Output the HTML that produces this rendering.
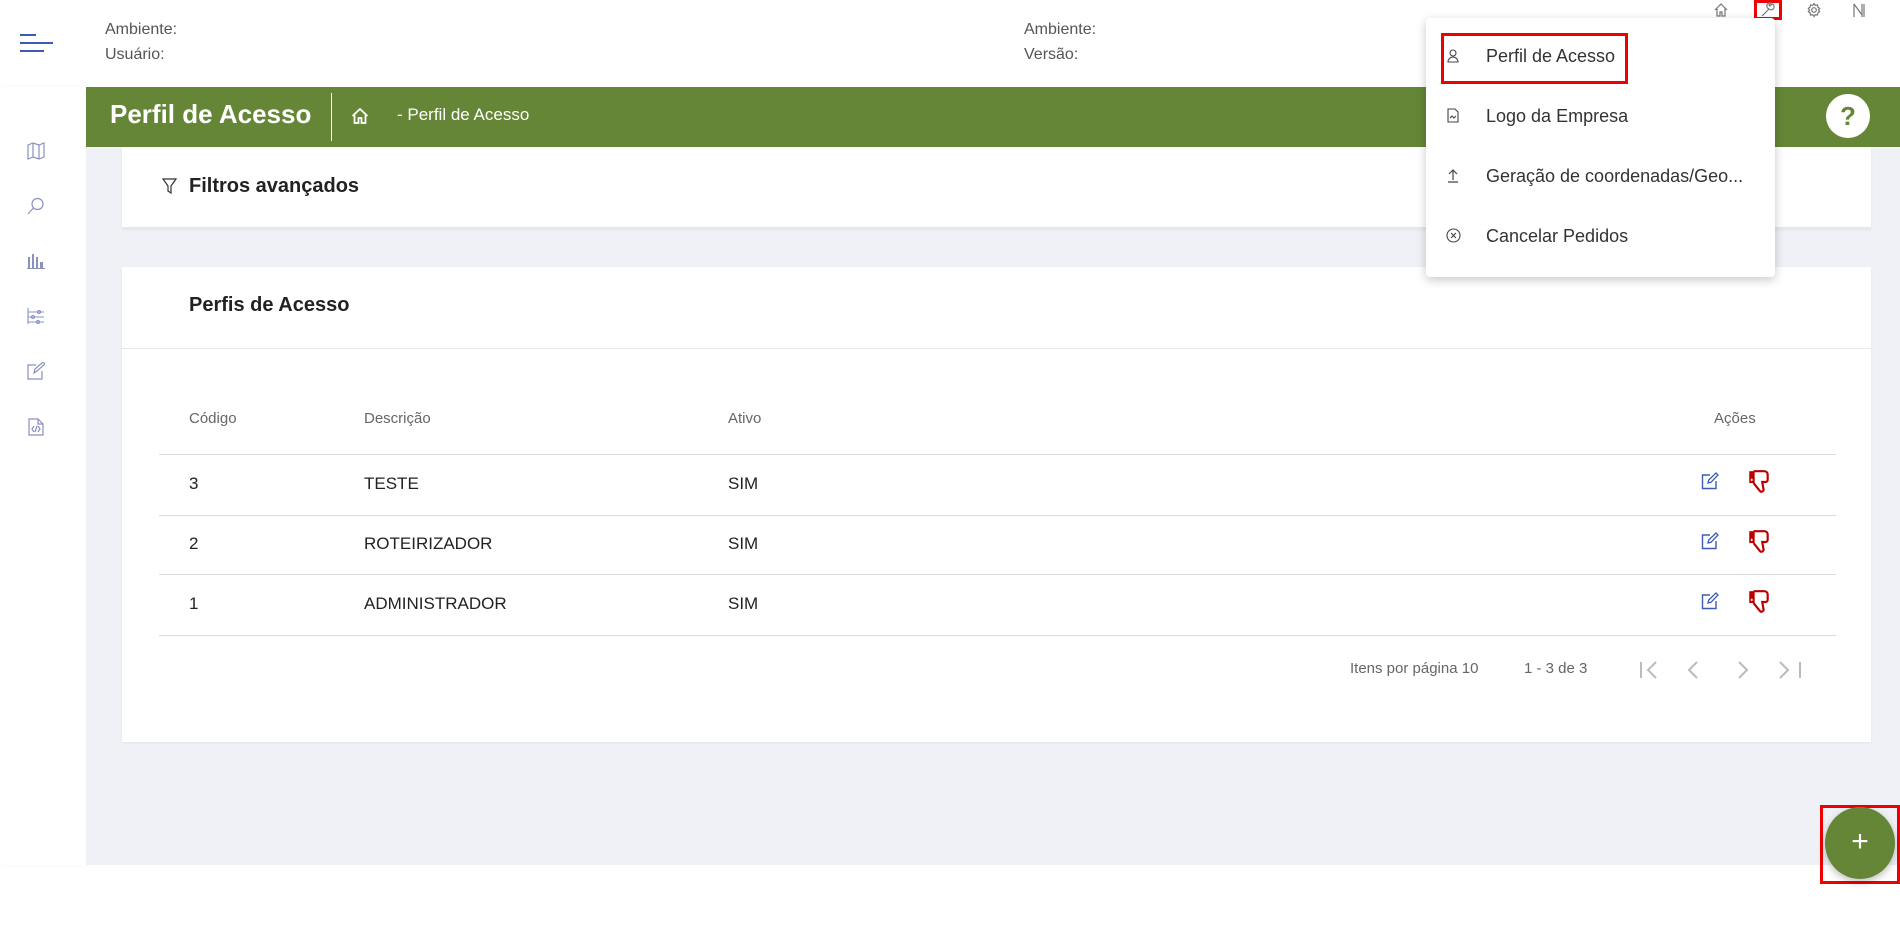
<!DOCTYPE html>
<html><head><meta charset="utf-8"><style>
*{margin:0;padding:0;box-sizing:border-box}
body{width:1900px;height:943px;overflow:hidden;background:#fff;font-family:"Liberation Sans",sans-serif;color:#222;position:relative}
.abs{position:absolute}
.hdr{left:0;top:0;width:1900px;height:87px;background:#fff}
.htxt{font-size:16px;color:#555;line-height:25px}
.side{left:0;top:87px;width:86px;height:778px;background:#fff;box-shadow:2px 0 6px rgba(0,0,0,.04)}
.main{left:86px;top:87px;width:1814px;height:778px;background:#f0f1f6}
.green{left:86px;top:87px;width:1814px;height:60px;background:#648636}
.card{background:#fff;box-shadow:0 1px 3px rgba(0,0,0,.06)}
.th{font-size:15px;color:#666}
.td{font-size:17px;color:#222}
.line{height:1px;background:#dcdcdc;left:159px;width:1677px}
.menu{left:1426px;top:18px;width:349px;height:259px;background:#fff;border-radius:4px;box-shadow:0 3px 10px rgba(0,0,0,.22)}
.mi{font-size:18px;color:#333;left:60px}
svg{display:block}
</style></head><body>
<div class="abs hdr"></div>
<div class="abs" style="left:20px;top:34px;width:16px;height:2px;background:#3b5bb5"></div>
<div class="abs" style="left:20px;top:42px;width:33px;height:2px;background:#3b5bb5"></div>
<div class="abs" style="left:20px;top:50px;width:24px;height:2px;background:#3b5bb5"></div>
<div class="abs htxt" style="left:105px;top:17px">Ambiente:<br>Usuário:</div>
<div class="abs htxt" style="left:1024px;top:17px">Ambiente:<br>Versão:</div>
<svg class="abs" style="left:1713px;top:2px" width="16" height="16" viewBox="0 0 16 16" fill="none" stroke="#777" stroke-width="1.2"><path d="M2 8L8 2l6 6M4 6.5V14h3v-4h2v4h3V6.5"/></svg>
<div class="abs" style="left:1754px;top:0;width:28px;height:20px;border:3px solid #e00"></div>
<svg class="abs" style="left:1760px;top:2px" width="16" height="16" viewBox="0 0 16 16" fill="none" stroke="#777" stroke-width="1.2"><path d="M2 14l7-7M9 7a3 3 0 1 0 3-5l-2 2-1-1 2-2a3 3 0 0 0-2 6z"/></svg>
<svg class="abs" style="left:1806px;top:2px" width="16" height="16" viewBox="0 0 16 16" fill="none" stroke="#777" stroke-width="1.2"><circle cx="8" cy="8" r="2.3"/><path d="M8 1.5l1.3 1.8 2.2-.4.4 2.2 1.8 1.3-1.2 1.6 1.2 1.6-1.8 1.3-.4 2.2-2.2-.4L8 14.5l-1.3-1.8-2.2.4-.4-2.2-1.8-1.3L3.5 8 2.3 6.4l1.8-1.3.4-2.2 2.2.4z"/></svg>
<svg class="abs" style="left:1852px;top:2px" width="14" height="16" viewBox="0 0 14 16" fill="none" stroke="#777" stroke-width="1.2"><path d="M2 2v13M2 2l8 11M10 2v13M12 2v13"/></svg>

<div class="abs side"></div>
<div class="abs main"></div>
<svg class="abs" style="left:27px;top:142px" width="18" height="18" viewBox="0 0 18 18" fill="none" stroke="#8a90c0" stroke-width="1.2"><path d="M1 3l5-2 6 2 5-2v14l-5 2-6-2-5 2zM6 1v14M12 3v14"/></svg>
<svg class="abs" style="left:27px;top:197px" width="18" height="18" viewBox="0 0 18 18" fill="none" stroke="#8a90c0" stroke-width="1.2"><circle cx="10.5" cy="7" r="5.5"/><path d="M6.5 11L1 17"/></svg>
<svg class="abs" style="left:27px;top:252px" width="18" height="18" viewBox="0 0 18 18" fill="#8a90c0"><rect x="1" y="5" width="2" height="12"/><rect x="5" y="2" width="2" height="15"/><rect x="9" y="5" width="2" height="12"/><rect x="13" y="10" width="3" height="7"/><rect x="0" y="16" width="18" height="1"/></svg>
<svg class="abs" style="left:27px;top:307px" width="18" height="18" viewBox="0 0 18 18" fill="none" stroke="#8a90c0" stroke-width="1.1"><path d="M1 1v16M1 5h16M1 10h16M1 15h16"/><circle cx="12" cy="5" r="1.5"/><circle cx="6" cy="10" r="1.5"/><circle cx="11" cy="15" r="1.5"/></svg>
<svg class="abs" style="left:27px;top:362px" width="18" height="18" viewBox="0 0 18 18" fill="none" stroke="#8a90c0" stroke-width="1.2"><path d="M9 3H1v14h14V9M7 11l1-4 8-7 2 2-8 7z"/></svg>
<svg class="abs" style="left:28px;top:418px" width="16" height="18" viewBox="0 0 16 18" fill="none" stroke="#8a90c0" stroke-width="1.2"><path d="M1 1h9l5 5v11H1zM10 1v5h5M6 8l-2 3 2 3M10 8l2 3-2 3M9 8l-2 6"/></svg>

<div class="abs green"></div>
<div class="abs" style="left:110px;top:99px;font-size:26px;font-weight:bold;color:#fff">Perfil de Acesso</div>
<div class="abs" style="left:331px;top:93px;width:1px;height:48px;background:#fff"></div>
<svg class="abs" style="left:351px;top:107px" width="18" height="18" viewBox="0 0 18 18" fill="none" stroke="#fff" stroke-width="1.8"><path d="M1.5 9L9 2l7.5 7M3.5 7.5V16h4v-5h3v5h4V7.5"/></svg>
<div class="abs" style="left:397px;top:105px;font-size:17px;color:#fff">- Perfil de Acesso</div>
<div class="abs" style="left:1826px;top:94px;width:44px;height:44px;border-radius:50%;background:#fff;color:#648636;font-weight:bold;font-size:26px;text-align:center;line-height:44px">?</div>

<div class="abs card" style="left:122px;top:147px;width:1749px;height:82px;border-bottom:2px solid #e6e7ec"></div>
<svg class="abs" style="left:162px;top:178px" width="15" height="16" viewBox="0 0 15 16" fill="none" stroke="#333" stroke-width="1.2"><path d="M1 1h13L9 8v7L6 13V8z"/></svg>
<div class="abs" style="left:189px;top:175px;font-size:20px;font-weight:bold;color:#222">Filtros avançados</div>

<div class="abs card" style="left:122px;top:267px;width:1749px;height:475px"></div>
<div class="abs" style="left:189px;top:294px;font-size:20px;font-weight:bold;color:#222">Perfis de Acesso</div>
<div class="abs" style="left:122px;top:348px;width:1749px;height:1px;background:#e8e8e8"></div>
<div class="abs th" style="left:189px;top:410px">Código</div>
<div class="abs th" style="left:364px;top:410px">Descrição</div>
<div class="abs th" style="left:728px;top:410px">Ativo</div>
<div class="abs th" style="left:1714px;top:410px">Ações</div>
<div class="abs line" style="top:454px"></div>
<div class="abs line" style="top:515px"></div>
<div class="abs line" style="top:574px"></div>
<div class="abs line" style="top:635px"></div>

<div class="abs td" style="left:189px;top:474px">3</div><div class="abs td" style="left:364px;top:474px">TESTE</div><div class="abs td" style="left:728px;top:474px">SIM</div>
<div class="abs td" style="left:189px;top:534px">2</div><div class="abs td" style="left:364px;top:534px">ROTEIRIZADOR</div><div class="abs td" style="left:728px;top:534px">SIM</div>
<div class="abs td" style="left:189px;top:594px">1</div><div class="abs td" style="left:364px;top:594px">ADMINISTRADOR</div><div class="abs td" style="left:728px;top:594px">SIM</div>

<svg width="0" height="0" style="position:absolute"><defs>
<g id="ed"><path d="M9 3H1.5v13.5H15V9" fill="none" stroke="#3b5bb5" stroke-width="1.4"/><path d="M7 11l.8-3L15 1l2 2-7 7.3z" fill="none" stroke="#3b5bb5" stroke-width="1.3"/></g>
<g id="td"><path d="M5 2H15a3 3 0 0 1 3 3v5a2 2 0 0 1-2 2H13l1 6a2 2 0 0 1-3 2.5L5 13" fill="#fff" stroke="#b00" stroke-width="2"/><rect x="1" y="2" width="5" height="11" fill="#b00"/><rect x="2.5" y="9" width="1.5" height="2" fill="#fff"/></g>
</defs></svg>
<svg class="abs" style="left:1701px;top:472px" width="18" height="18"><use href="#ed"/></svg>
<svg class="abs" style="left:1748px;top:469px" width="22" height="26" viewBox="0 0 20 24"><use href="#td"/></svg>
<svg class="abs" style="left:1701px;top:532px" width="18" height="18"><use href="#ed"/></svg>
<svg class="abs" style="left:1748px;top:529px" width="22" height="26" viewBox="0 0 20 24"><use href="#td"/></svg>
<svg class="abs" style="left:1701px;top:592px" width="18" height="18"><use href="#ed"/></svg>
<svg class="abs" style="left:1748px;top:589px" width="22" height="26" viewBox="0 0 20 24"><use href="#td"/></svg>

<div class="abs" style="left:1350px;top:660px;font-size:15px;color:#666">Itens por página 10</div>
<div class="abs" style="left:1524px;top:660px;font-size:15px;color:#666">1 - 3 de 3</div>
<svg class="abs" style="left:1638px;top:659px" width="170" height="22" fill="none" stroke="#bbb" stroke-width="2"><path d="M3 3v16M18 3l-8 8 8 8M59 3l-8 8 8 8M101 3l8 8-8 8M142 3l8 8-8 8M162 3v16"/></svg>

<div class="abs" style="left:1820px;top:805px;width:80px;height:79px;border:3px solid #e00"></div>
<div class="abs" style="left:1825px;top:807px;width:70px;height:72px;border-radius:50%;background:#648636;box-shadow:0 3px 8px rgba(0,0,0,.25);color:#fff;font-size:30px;text-align:center;line-height:70px">+</div>

<div class="abs menu">
  <div class="abs" style="left:15px;top:15px;width:187px;height:51px;border:3px solid #e00"></div>
  <svg class="abs" style="left:21px;top:31px" width="12" height="14" viewBox="0 0 12 14" fill="none" stroke="#444" stroke-width="1.1"><circle cx="6" cy="4" r="3"/><path d="M1 13a5 5 0 0 1 10 0z"/></svg>
  <div class="abs mi" style="top:28px">Perfil de Acesso</div>
  <svg class="abs" style="left:21px;top:90px" width="12" height="15" viewBox="0 0 12 15" fill="none" stroke="#444" stroke-width="1.1"><path d="M1 1h7l3 3v10H1zM3 10l2-2 2 2 2-2"/></svg>
  <div class="abs mi" style="top:88px">Logo da Empresa</div>
  <svg class="abs" style="left:21px;top:150px" width="12" height="15" viewBox="0 0 12 15" fill="none" stroke="#444" stroke-width="1.2"><path d="M6 2v10M2 6l4-4 4 4M1 14h10"/></svg>
  <div class="abs mi" style="top:148px">Geração de coordenadas/Geo...</div>
  <svg class="abs" style="left:20px;top:210px" width="15" height="15" viewBox="0 0 15 15" fill="none" stroke="#444" stroke-width="1.1"><circle cx="7.5" cy="7.5" r="6.5"/><path d="M5 5l5 5M10 5l-5 5"/></svg>
  <div class="abs mi" style="top:208px">Cancelar Pedidos</div>
</div>
</body></html>
